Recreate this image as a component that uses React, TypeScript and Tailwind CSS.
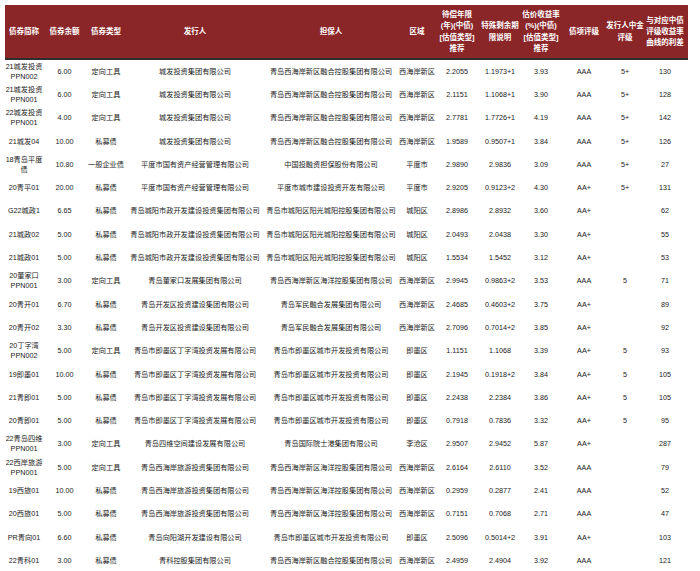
import React from "react";

const headers: string[] = [
  "债券简称",
  "债券余额",
  "债券类型",
  "发行人",
  "担保人",
  "区域",
  "待偿年限|(年)(中债)|[估值类型]|推荐",
  "特殊剩余期|限说明",
  "估价收益率|(%)(中债)|[估值类型]|推荐",
  "债项评级",
  "发行人中金|评级",
  "与对应中债|评级收益率|曲线的利差",
];

const CW = "城发投资集团有限公司";
const XH = "青岛西海岸新区融合控股集团有限公司";
const CY = "青岛城阳市政开发建设投资集团有限公司";
const CYG = "青岛市城阳区阳光城阳控股集团有限公司";
const QK = "青岛开发区投资建设集团有限公司";
const JM = "青岛军民融合发展集团有限公司";
const DZW = "青岛市即墨区丁字湾投资发展有限公司";
const JMK = "青岛市即墨区城市开发投资有限公司";
const XLY = "青岛西海岸旅游投资集团有限公司";
const HY = "青岛西海岸新区海洋控股集团有限公司";
const XHA = "西海岸新区";

const rows: string[][] = [
  ["21城发投资|PPN002", "6.00", "定向工具", CW, XH, XHA, "2.2055", "1.1973+1", "3.93", "AAA", "5+", "130"],
  ["21城发投资|PPN001", "6.00", "定向工具", CW, XH, XHA, "2.1151", "1.1068+1", "3.90", "AAA", "5+", "128"],
  ["22城发投资|PPN001", "4.00", "定向工具", CW, XH, XHA, "2.7781", "1.7726+1", "4.19", "AAA", "5+", "142"],
  ["21城发04", "10.00", "私募债", CW, XH, XHA, "1.9589", "0.9507+1", "3.84", "AAA", "5+", "126"],
  ["18青岛平度|债", "10.80", "一般企业债", "平度市国有资产经营管理有限公司", "中国投融资担保股份有限公司", "平度市", "2.9890", "2.9836", "3.09", "AAA", "5+", "27"],
  ["20青平01", "20.00", "私募债", "平度市国有资产经营管理有限公司", "平度市城市建设投资开发有限公司", "平度市", "2.9205", "0.9123+2", "4.30", "AA+", "5+", "131"],
  ["G22城政1", "6.65", "私募债", CY, CYG, "城阳区", "2.8986", "2.8932", "3.60", "AA+", "", "62"],
  ["21城政02", "5.00", "私募债", CY, CYG, "城阳区", "2.0493", "2.0438", "3.30", "AA+", "", "55"],
  ["21城政01", "5.00", "私募债", CY, CYG, "城阳区", "1.5534", "1.5452", "3.12", "AA+", "", "53"],
  ["20董家口|PPN001", "3.00", "定向工具", "青岛董家口发展集团有限公司", HY, XHA, "2.9945", "0.9863+2", "3.53", "AAA", "5", "71"],
  ["20青开01", "6.70", "私募债", QK, JM, XHA, "2.4685", "0.4603+2", "3.75", "AA+", "", "89"],
  ["20青开02", "3.30", "私募债", QK, JM, XHA, "2.7096", "0.7014+2", "3.85", "AA+", "", "92"],
  ["20丁字湾|PPN002", "5.00", "定向工具", DZW, JMK, "即墨区", "1.1151", "1.1068", "3.39", "AA+", "5", "93"],
  ["19即墨01", "10.00", "私募债", DZW, JMK, "即墨区", "2.1945", "0.1918+2", "3.84", "AA+", "5", "105"],
  ["21青即01", "5.00", "私募债", DZW, JMK, "即墨区", "2.2438", "2.2384", "3.86", "AA+", "5", "105"],
  ["20青即01", "5.00", "私募债", DZW, JMK, "即墨区", "0.7918", "0.7836", "3.32", "AA+", "5", "95"],
  ["22青岛四维|PPN001", "3.00", "定向工具", "青岛四维空间建设发展有限公司", "青岛国际院士港集团有限公司", "李沧区", "2.9507", "2.9452", "5.87", "AA+", "", "287"],
  ["22西岸旅游|PPN001", "5.00", "定向工具", XLY, HY, XHA, "2.6164", "2.6110", "3.52", "AAA", "", "79"],
  ["19西旅01", "10.00", "私募债", XLY, HY, XHA, "0.2959", "0.2877", "2.41", "AAA", "", "52"],
  ["20西旅01", "5.00", "私募债", XLY, HY, XHA, "0.7151", "0.7068", "2.71", "AAA", "", "47"],
  ["PR青向01", "6.60", "私募债", "青岛向阳湖开发建设有限公司", JMK, "即墨区", "2.5096", "0.5014+2", "3.91", "AA+", "", "103"],
  ["22青科01", "3.00", "私募债", "青科控股集团有限公司", XH, XHA, "2.4959", "2.4904", "3.92", "AAA", "", "121"],
];

const grid =
  "grid grid-cols-[38px_43px_40px_138px_134px_38px_42px_44px_38px_48px_34px_46px]";

function Lines({ text }: { text: string }) {
  const parts = text.split("|");
  return (
    <div className="flex flex-col items-center">
      {parts.map((p, i) => (
        <span key={i} className="whitespace-nowrap">
          {p}
        </span>
      ))}
    </div>
  );
}

export default function App() {
  return (
    <div
      className="w-[700px] h-[571px] overflow-hidden bg-white pt-[5px] pl-[5px]"
      style={{ fontFamily: '"Liberation Sans", Arial, "Noto Sans CJK SC", sans-serif' }}
    >
      <div className="w-[683px]">
        <div
          className={`${grid} h-[55px] bg-[#8a2528] border-b-2 border-[#2e2e2e] text-white font-bold text-[7.5px] leading-[11.3px]`}
        >
          {headers.map((h, i) => (
            <div key={i} className="flex items-center justify-center text-center">
              <Lines text={h} />
            </div>
          ))}
        </div>
        {rows.map((r, ri) => (
          <div
            key={ri}
            className={`${grid} h-[23.3px] text-[#1a1a1a] text-[7.2px] leading-[10px]`}
          >
            {r.map((c, ci) => (
              <div key={ci} className="flex items-center justify-center text-center">
                <Lines text={c} />
              </div>
            ))}
          </div>
        ))}
      </div>
    </div>
  );
}
